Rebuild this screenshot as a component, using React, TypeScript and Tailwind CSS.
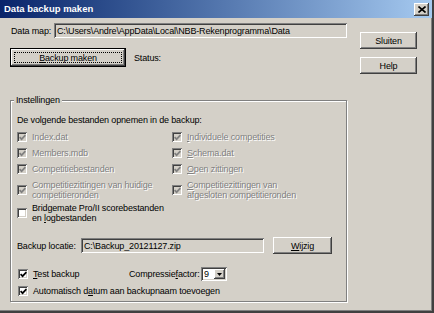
import type { ReactNode } from "react";

const raised =
  "shadow-[inset_-1px_-1px_#404040,inset_1px_1px_#ffffff,inset_-2px_-2px_#808080,inset_2px_2px_#d4d0c8]";
const sunken =
  "shadow-[inset_1px_1px_#808080,inset_-1px_-1px_#ffffff,inset_2px_2px_#404040,inset_-2px_-2px_#d4d0c8]";
const grayText = "text-[#808080] [text-shadow:1px_1px_0_#ffffff]";

function CheckBox({ checked, disabled }: { checked?: boolean; disabled?: boolean }) {
  return (
    <span
      className={`flex h-[10px] w-[10px] shrink-0 items-center justify-center ${sunken} ${
        disabled ? "bg-[#d4d0c8]" : "bg-white"
      }`}
    >
      {checked && (
        <svg width="7" height="7" viewBox="0 0 7 7">
          <path
            d="M0.6 3.2 L2.6 5.2 L6.4 1.2"
            fill="none"
            stroke={disabled ? "#808080" : "#000000"}
            strokeWidth="1.7"
          />
        </svg>
      )}
    </span>
  );
}

function Option({
  label,
  checked,
  disabled,
}: {
  label: ReactNode;
  checked?: boolean;
  disabled?: boolean;
}) {
  return (
    <div className="flex items-center gap-[5px]">
      <CheckBox checked={checked} disabled={disabled} />
      <span className={disabled ? grayText : ""}>{label}</span>
    </div>
  );
}

function Button({ children, className = "" }: { children: ReactNode; className?: string }) {
  return (
    <div className={`flex items-center justify-center bg-[#d4d0c8] ${raised} ${className}`}>
      {children}
    </div>
  );
}

export default function App() {
  return (
    <div className="relative h-[313px] w-[434px] overflow-hidden bg-[#d4d0c8] font-['Liberation_Sans',Arial,sans-serif] text-[9px] leading-[10px] tracking-[-0.15px] text-black shadow-[inset_-2px_-2px_#404040,inset_-3px_-3px_#808080]">
      {/* Title bar */}
      <div className="mr-[2px] flex h-[18px] items-center justify-between bg-linear-to-r from-[#0a246a] to-[#a6caf0] pl-[4px] pr-[3px]">
        <span className="text-[9.5px] font-bold tracking-normal text-white">Data backup maken</span>
        <div className={`flex h-[13px] w-[15px] items-center justify-center bg-[#d4d0c8] ${raised}`}>
          <svg width="8" height="7" viewBox="0 0 8 7">
            <path d="M0.5 0.5 L7.5 6.5 M7.5 0.5 L0.5 6.5" stroke="#000" strokeWidth="1.6" />
          </svg>
        </div>
      </div>

      <div className="flex pl-[10px] pt-[5px]">
        {/* Left column */}
        <div className="w-[337px]">
          <div className="flex h-[15px] items-center">
            <span className="pl-[1px]">Data map:</span>
            <div className={`ml-auto flex h-[15px] w-[293px] items-center px-[3px] ${sunken}`}>
              C:\Users\Andre\AppData\Local\NBB-Rekenprogramma\Data
            </div>
          </div>

          <div className="mt-[10px] flex items-center">
            <div className="h-[19px] w-[116px] border border-black">
              <Button className="h-full w-full p-[3px]">
                <div className="flex h-full w-full items-center justify-center border border-dotted border-black">
                  <span>
                    <span className="underline">B</span>ackup maken
                  </span>
                </div>
              </Button>
            </div>
            <span className="ml-[8px]">Status:</span>
          </div>

          {/* Instellingen group */}
          <div className="relative mt-[33px] h-[202px] border border-[#808080] pl-[6px] pt-[14px] shadow-[inset_1px_1px_#ffffff,1px_1px_#ffffff]">
            <span className="absolute -top-[6px] left-[3px] bg-[#d4d0c8] px-[2px]">Instellingen</span>

            <div>De volgende bestanden opnemen in de backup:</div>

            <div className="mt-[7px] grid grid-cols-[155px_1fr] gap-y-[6px]">
              <Option label="Index.dat" checked disabled />
              <Option
                label={
                  <>
                    <span className="underline">I</span>ndividuele competities
                  </>
                }
                checked
                disabled
              />
              <Option label="Members.mdb" checked disabled />
              <Option
                label={
                  <>
                    <span className="underline">S</span>chema.dat
                  </>
                }
                checked
                disabled
              />
              <Option label="Competitiebestanden" checked disabled />
              <Option
                label={
                  <>
                    <span className="underline">O</span>pen zittingen
                  </>
                }
                checked
                disabled
              />
              <Option
                label={
                  <>
                    Competitiezittingen van huidige
                    <br />
                    competitieronden
                  </>
                }
                checked
                disabled
              />
              <Option
                label={
                  <>
                    <span className="underline">C</span>ompetitiezittingen van
                    <br />
                    afgesloten competitieronden
                  </>
                }
                checked
                disabled
              />
            </div>

            <div className="mt-[3px]">
              <Option
                label={
                  <>
                    Bridgemate Pro/II scorebestanden
                    <br />
                    en <span className="underline">l</span>ogbestanden
                  </>
                }
              />
            </div>

            <div className="mt-[14px] flex h-[17px] items-center">
              <span className="w-[64px]">Backup locatie:</span>
              <div className={`flex h-[15px] w-[183px] items-center px-[3px] ${sunken}`}>
                C:\Backup_20121127.zip
              </div>
              <Button className="ml-[9px] h-[17px] w-[59px]">
                <span>
                  <span className="underline">W</span>ijzig
                </span>
              </Button>
            </div>

            <div className="mt-[13px] flex h-[14px] items-center pl-[1px]">
              <div className="w-[111px]">
                <Option
                  checked
                  label={
                    <>
                      <span className="underline">T</span>est backup
                    </>
                  }
                />
              </div>
              <span className="w-[72px] whitespace-nowrap">
                Compressie<span className="underline">f</span>actor:
              </span>
              <div className={`flex h-[14px] w-[26px] items-center bg-white pl-[3px] pr-[2px] ${sunken}`}>
                <span className="flex-1">9</span>
                <div className={`flex h-[10px] w-[11px] items-center justify-center bg-[#d4d0c8] ${raised}`}>
                  <svg width="5" height="3" viewBox="0 0 5 3">
                    <path d="M0 0 H5 L2.5 3 Z" fill="#000" />
                  </svg>
                </div>
              </div>
            </div>

            <div className="mt-[5px] pl-[1px]">
              <Option
                checked
                label={
                  <>
                    Automatisch d<span className="underline">a</span>tum aan backupnaam toevoegen
                  </>
                }
              />
            </div>
          </div>
        </div>

        {/* Right column */}
        <div className="ml-[13px] mt-[9px] flex flex-col gap-[8px]">
          <Button className="h-[17px] w-[57px]">Sluiten</Button>
          <Button className="h-[17px] w-[57px]">Help</Button>
        </div>
      </div>
    </div>
  );
}
